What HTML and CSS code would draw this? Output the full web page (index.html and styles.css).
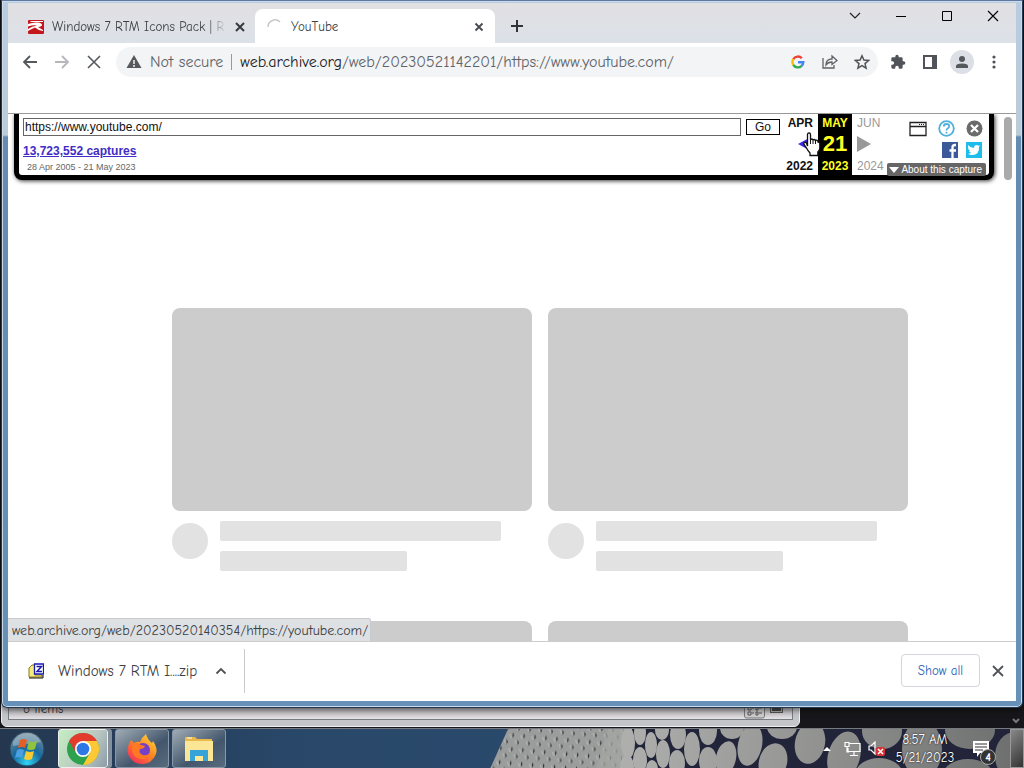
FILE: index.html
```html
<!DOCTYPE html>
<html lang="en">
<head>
<meta charset="utf-8">
<title>YouTube</title>
<link rel="stylesheet" href="styles.css">
</head>
<body>
<main class="desktop">
  <section class="explorer" aria-label="Explorer">
    <div class="explorer-status">
      <span>6 items</span>
      <span class="views">
        <svg width="22" height="16" viewBox="0 0 22 16"><rect x=".5" y="-4" width="20" height="19" rx="2" fill="#ccc" stroke="#777"/><path d="M4 4h3v3H4zM4 9h3v3H4zM12 4h2v3h-2zM12 9h2v3h-2z" fill="none" stroke="#555"/><path d="M8 5h2M8 10h2M15 5h3M15 10h3" stroke="#555"/></svg>
        <svg width="14" height="16" viewBox="0 0 14 16"><rect x=".5" y="0.5" width="12" height="9" fill="#aaa" stroke="#555"/><path d="M2 3h9v5H2z" fill="#444"/></svg>
      </span>
    </div>
  </section>
  <svg class="peek-chevron" width="8" height="6" viewBox="0 0 8 6"><path d="M1 1l3 3 3-3" fill="none" stroke="#777" stroke-width="2"/></svg>

  <section class="browser" aria-label="Browser">
    <header class="tabstrip">
      <div class="tab">
        <svg class="favicon" width="16" height="16" viewBox="0 0 16 16"><rect y="1" width="16" height="14" rx="1" fill="#c5161d"/><path d="M0 5q5-2 10-1.500 4 .5 4 2.500 0 1.500-4 2l5 3v1q-4 0-8-3.500-3 1-7 3.500v-2q4-3 9-3.500Q5 5.500 0 7.500zM3 2h12v1H2z" fill="#fff"/></svg>
        <span class="tab-title fade">Windows 7 RTM Icons Pack | R</span>
        <button class="plain" aria-label="Close tab"><svg width="10" height="10" viewBox="0 0 10 10"><path d="M1 1l8 8M9 1L1 9" stroke="#36393d" stroke-width="2"/></svg></button>
      </div>
      <div class="tab active">
        <svg class="favicon" width="16" height="16" viewBox="0 0 16 16"><path d="M1 8a7 7 0 0 1 12-5" fill="none" stroke="#c6c8cc" stroke-width="1.500"/></svg>
        <span class="tab-title">YouTube</span>
        <button class="plain" aria-label="Close tab"><svg width="10" height="10" viewBox="0 0 10 10"><path d="M1.500 1.500l7 7M8.500 1.500l-7 7" stroke="#46494d" stroke-width="1.800"/></svg></button>
      </div>
      <button class="plain new-tab" aria-label="New tab"><svg width="14" height="14" viewBox="0 0 14 14"><path d="M7 1v12M1 7h12" stroke="#303338" stroke-width="2"/></svg></button>
      <div class="window-controls">
        <button class="plain" aria-label="Search tabs"><svg width="12" height="12" viewBox="0 0 12 12"><path d="M1 3l5 5 5-5" fill="none" stroke="#222" stroke-width="1.200"/></svg></button>
        <button class="plain" aria-label="Minimize"><svg width="12" height="12" viewBox="0 0 12 12"><path d="M1 6.500h10" stroke="#000"/></svg></button>
        <button class="plain" aria-label="Maximize"><svg width="12" height="12" viewBox="0 0 12 12"><path d="M1.500 1.500h9v9h-9z" fill="none" stroke="#000"/></svg></button>
        <button class="plain" aria-label="Close"><svg width="12" height="12" viewBox="0 0 12 12"><path d="M1 1l10 10M11 1L1 11" stroke="#000" stroke-width="1.100"/></svg></button>
      </div>
    </header>

    <nav class="toolbar" aria-label="Navigation">
      <div class="nav-buttons">
        <button class="plain" aria-label="Back"><svg width="16" height="16" viewBox="0 0 16 16"><path d="M15 8H2M8 2L2 8l6 6" fill="none" stroke="#55585c" stroke-width="1.800"/></svg></button>
        <button class="plain" aria-label="Forward"><svg width="16" height="16" viewBox="0 0 16 16"><path d="M1 8h13M8 2l6 6-6 6" fill="none" stroke="#b5b7ba" stroke-width="1.800"/></svg></button>
        <button class="plain" aria-label="Stop"><svg width="16" height="16" viewBox="0 0 16 16"><path d="M2 2l12 12M14 2L2 14" stroke="#55585c" stroke-width="1.600"/></svg></button>
      </div>
      <div class="omnibox">
        <svg width="16" height="16" viewBox="0 0 16 16"><path d="M8 1l7.500 13H.5z" fill="#55585c"/><path d="M8 6v4M8 11v2" stroke="#f1f3f4" stroke-width="1.500"/></svg>
        <span class="not-secure">Not secure</span>
        <span class="url"><b>web.archive.org</b>/web/20230521142201/https://www.youtube.com/</span>
        <button class="plain" aria-label="Search with Google"><svg width="14" height="14" viewBox="0 0 14 14" fill="none" stroke-width="2.400"><path d="M2.300 4.200A5.300 5.300 0 0 1 10.800 3.300" stroke="#ea4335"/><path d="M2.300 4.200a5.300 5.300 0 0 0 0 5.600" stroke="#fbbc05"/><path d="M2.300 9.800a5.300 5.300 0 0 0 8.300 1" stroke="#34a853"/><path d="M7 7.200h5.300a5.300 5.300 0 0 1-1.700 3.600" stroke="#4285f4"/></svg></button>
        <button class="plain" aria-label="Share"><svg width="16" height="16" viewBox="0 0 16 16"><path d="M1 4v10h11v-3M4 11q0-6 6-6V2l5 4.500-5 4V8q-4 0-6 3z" fill="none" stroke="#5f6368" stroke-width="1.300"/></svg></button>
        <button class="plain" aria-label="Bookmark"><svg width="16" height="16" viewBox="0 0 16 16"><path d="M8 1.800l1.900 4.300 4.700.4-3.600 3.100 1.100 4.600L8 11.700l-4.100 2.500L5 9.600 1.400 6.500l4.700-.4z" fill="none" stroke="#505458" stroke-width="1.500"/></svg></button>
      </div>
      <div class="actions">
        <button class="plain" aria-label="Extensions"><svg width="16" height="16" viewBox="0 0 24 24"><path d="M20.500 11H19V7a2 2 0 0 0-2-2h-4V3.500a2.500 2.500 0 0 0-5 0V5H4a2 2 0 0 0-2 2v3.800h1.500a2.700 2.700 0 0 1 0 5.400H2V20a2 2 0 0 0 2 2h3.800v-1.500a2.700 2.700 0 0 1 5.400 0V22H17a2 2 0 0 0 2-2v-4h1.500a2.500 2.500 0 0 0 0-5z" fill="#505357"/></svg></button>
        <button class="plain" aria-label="Side panel"><svg width="14" height="14" viewBox="0 0 14 14"><path d="M1 1h12v12H1z" fill="none" stroke="#505357" stroke-width="2"/><path d="M9 1h4v12H9z" fill="#505357"/></svg></button>
        <button class="plain avatar" aria-label="Profile"><svg width="14" height="14" viewBox="0 0 14 14" fill="#55585c"><circle cx="7" cy="4" r="3"/><path d="M1 13v-2q0-2.500 6-2.500t6 2.500v2z"/></svg></button>
        <button class="plain" aria-label="Menu"><svg width="16" height="16" viewBox="0 0 16 16" fill="#505357"><circle cx="8" cy="3" r="1.600"/><circle cx="8" cy="8" r="1.600"/><circle cx="8" cy="13" r="1.600"/></svg></button>
      </div>
    </nav>
    <div class="blank-bar"></div>

    <div class="viewport">
      <div class="wayback">
        <div class="wb-search">
          <form class="wb-form"><input type="text" aria-label="Archive URL" value="https://www.youtube.com/"><button type="button">Go</button></form>
          <a class="captures" href="#">13,723,552 captures</a>
          <span class="range">28 Apr 2005 - 21 May 2023</span>
        </div>
        <table class="calendar">
          <tr><td class="prev">APR</td><td class="now">MAY</td><td class="next">JUN</td></tr>
          <tr class="day"><td class="prev"><span class="arrow-cell"><svg width="13" height="14" viewBox="0 0 13 14"><path d="M0 7l13-7v14z" fill="#3a28e0"/></svg>
            <svg class="cursor" width="18" height="25" viewBox="0 0 18 25"><path d="M4.500 14V2.500Q4.500 1 6 1t1.500 1.500V8q.2-1 1.300-1T10 8.500q.2-1 1.300-1t1.200 1.500q.2-1 1.300-.8T15 10q1.800 0 1.800 1.500V16q0 2-2 4v3.500H7V21q-2-2-3.500-5L1 12.500q-.5-1.500.5-2t2 .5z" fill="#fff" stroke="#111" stroke-width="1.300"/><path d="M7.500 8v4M10 8.500V12M12.500 9v3" stroke="#111"/></svg></span></td><td class="now">21</td><td class="next"><svg width="14" height="16" viewBox="0 0 14 16"><path d="M0 0l14 8-14 8z" fill="#999"/></svg></td></tr>
          <tr><td class="prev">2022</td><td class="now">2023</td><td class="next">2024</td></tr>
        </table>
        <div class="wb-tools">
          <div class="wb-icons">
            <button class="plain" aria-label="Screenshot"><svg width="18" height="16" viewBox="0 0 18 16"><path d="M1 1.500h16v13H1zM1 5.500h16" fill="none" stroke="#222" stroke-width="1.300"/><path d="M10 3.500h1M12 3.500h1M14 3.500h1" stroke="#222"/></svg></button>
            <button class="plain" aria-label="Help"><svg width="17" height="17" viewBox="0 0 17 17"><circle cx="8.500" cy="8.500" r="7.300" fill="none" stroke="#4eb0db" stroke-width="1.800"/><path d="M5.800 6.500q0-2.500 2.700-2.500t2.700 2.200q0 1.300-1.300 2T8.500 10.500M8.500 11.800v1.800" fill="none" stroke="#4eb0db" stroke-width="1.800"/></svg></button>
            <button class="plain" aria-label="Close toolbar"><svg width="17" height="17" viewBox="0 0 17 17"><circle cx="8.500" cy="8.500" r="8" fill="#6b6b6b"/><path d="M5 5l7 7M12 5l-7 7" stroke="#fff" stroke-width="2.200"/></svg></button>
          </div>
          <div class="wb-icons">
            <a href="#" aria-label="Facebook"><svg width="16" height="16" viewBox="0 0 16 16"><path d="M0 0h16v16H0z" fill="#3b5998"/><path d="M14 3h-1q-2.500 0-2.500 2.500V16M7.500 8.500H14" fill="none" stroke="#fff" stroke-width="2.300"/></svg></a>
            <a href="#" aria-label="Twitter"><svg width="16" height="16" viewBox="0 0 16 16"><path d="M0 0h16v16H0z" fill="#1dbcea"/><path d="M2 3q2.500 3 6 3 0-3 3-3l1.500.8L14 3.200 13 5q.5 7-6 8-3 .3-5-1.200 2 0 3.300-1Q3.500 10.500 3 9h1.200Q2 8 2.200 6z" fill="#fff"/></svg></a>
          </div>
          <button class="about"><svg width="10" height="6" viewBox="0 0 10 6"><path d="M0 0h10L5 6z" fill="#fff"/></svg>About this capture</button>
        </div>
      </div>
      <div class="scrollbar"></div>
      <div class="feed">
        <article class="card"><div class="thumb"></div><div class="meta"><i class="circle"></i><div class="lines"><i class="line long"></i><i class="line"></i></div></div></article>
        <article class="card"><div class="thumb"></div><div class="meta"><i class="circle"></i><div class="lines"><i class="line long"></i><i class="line"></i></div></div></article>
        <article class="card"><div class="thumb"></div></article>
        <article class="card"><div class="thumb"></div></article>
      </div>
      <div class="status-bubble">web.archive.org/web/20230520140354/https://youtube.com/</div>
    </div>

    <footer class="downloads">
      <div class="download">
        <svg width="16" height="16" viewBox="0 0 16 16"><path d="M1 5l3-3h3v10h7v2H1z" fill="#f4ec7c" stroke="#8b7b10"/><path d="M1 15h14v-3" fill="none" stroke="#111"/><path d="M6.500 1h9v10h-9z" fill="#fff" stroke="#1a1ab0" stroke-width="1.300"/><path d="M8.500 3.500h5l-4.500 5h5" fill="none" stroke="#1a1ab0" stroke-width="1.500"/></svg>
        <span>Windows 7 RTM I....zip</span>
        <button class="plain" aria-label="Download options"><svg width="12" height="8" viewBox="0 0 12 8"><path d="M1.500 6.500L6 2l4.500 4.500" fill="none" stroke="#505357" stroke-width="1.800"/></svg></button>
      </div>
      <button class="show-all">Show all</button>
      <button class="plain" aria-label="Close downloads"><svg width="12" height="12" viewBox="0 0 12 12"><path d="M1 1l10 10M11 1L1 11" stroke="#505357" stroke-width="1.800"/></svg></button>
    </footer>
  </section>
</main>

<footer class="taskbar">
  <svg class="wallpaper" width="536" height="40" viewBox="0 0 536 40">
    <defs>
      <pattern id="small" width="11" height="14" patternUnits="userSpaceOnUse" patternTransform="rotate(5)"><rect width="11" height="14" fill="#9b9d9c"/><path d="M3 1l1.500 3L3 7zM8.500 8l1.500 3-1.500 3z" fill="#303336"/><path d="M0 3l2 4M6 9l2 4" stroke="#bdbdb9"/></pattern>
      <linearGradient id="disc" gradientUnits="userSpaceOnUse" x1="140" x2="536"><stop stop-color="#aeafad"/><stop offset=".4" stop-color="#979896"/><stop offset="1" stop-color="#6c6e6d"/></linearGradient>
    </defs>
    <path d="M20 0H190V40H2z" fill="url(#small)"/>
    <path d="M120 0H160V40H108z" fill="#a5a6a4" opacity=".7"/>
    <path d="M144 0H536V40H138z" fill="#22253a"/>
    <g fill="url(#disc)">
      <ellipse cx="140" cy="14" rx="7" ry="16"/><ellipse cx="139" cy="38" rx="7" ry="12"/><ellipse cx="152" cy="4" rx="6" ry="12"/><ellipse cx="163" cy="16" rx="6" ry="13"/><ellipse cx="152" cy="31" rx="7" ry="13"/><ellipse cx="164" cy="40" rx="6" ry="9"/><ellipse cx="174" cy="1" rx="7" ry="10"/><ellipse cx="175" cy="25" rx="7" ry="14"/><ellipse cx="190" cy="6" rx="8" ry="14"/><ellipse cx="189" cy="34" rx="8" ry="13"/><ellipse cx="204" cy="20" rx="8" ry="17"/><ellipse cx="220" cy="2" rx="9" ry="14"/><ellipse cx="220" cy="32" rx="9" ry="14"/><ellipse cx="244" cy="-1" rx="12" ry="11"/><ellipse cx="238" cy="29" rx="10" ry="17" transform="rotate(12 238 29)"/><ellipse cx="262" cy="16" rx="12" ry="21" transform="rotate(12 262 16)"/><ellipse cx="294" cy="-2" rx="15" ry="12"/><ellipse cx="285" cy="33" rx="14" ry="19" transform="rotate(16 285 33)"/><ellipse cx="322" cy="14" rx="15" ry="21" transform="rotate(12 322 14)"/><ellipse cx="356" cy="27" rx="16" ry="25" transform="rotate(16 356 27)"/><ellipse cx="394" cy="2" rx="20" ry="18"/><ellipse cx="391" cy="44" rx="23" ry="15"/><ellipse cx="434" cy="20" rx="20" ry="29"/><ellipse cx="482" cy="1" rx="25" ry="19"/><ellipse cx="480" cy="46" rx="25" ry="16"/><ellipse cx="527" cy="27" rx="20" ry="24"/>
    </g>
  </svg>
  <button class="plain start" aria-label="Start"><svg width="36" height="36" viewBox="0 0 36 36"><defs><radialGradient id="orb" cx=".5" cy=".9" r=".85"><stop stop-color="#30d5f5"/><stop offset=".5" stop-color="#17699e"/><stop offset="1" stop-color="#6c8799"/></radialGradient></defs><circle cx="18" cy="18" r="17" fill="url(#orb)" stroke="#284357"/><path d="M4 11q5-9 14-9t14 9q-14 2-28 4z" fill="#fff" opacity=".3"/><path d="M11 9q3-2 7 0l-2 8q-3-2-7 0z" fill="#e65f22"/><path d="M20 10q4 2 8 0l-2 8q-4 2-8 0z" fill="#91c43d"/><path d="M8 19q4-2 7 0l-2 8q-3-2-7 0z" fill="#4c9fe0"/><path d="M17 20q4 2 8 0l-2 8q-4 2-8 0z" fill="#f8c930"/></svg></button>
  <button class="task running" aria-label="Chrome"><svg width="34" height="34" viewBox="0 0 34 34"><circle cx="17" cy="17" r="16" fill="#2da14c"/><path d="M3.100 9A16 16 0 0 1 30.900 9H17l-7 12z" fill="#e33b2e"/><path d="M30.900 9A16 16 0 0 1 17 33l7-12-7-12z" fill="#fcc934"/><circle cx="17" cy="17" r="8" fill="#fff"/><circle cx="17" cy="17" r="6.300" fill="#2d78e5"/></svg></button>
  <button class="task" aria-label="Firefox"><svg width="32" height="32" viewBox="0 0 32 32"><defs><linearGradient id="fire" x1="1" x2=".2" y2="1"><stop stop-color="#ffe64a"/><stop offset=".5" stop-color="#ff8a20"/><stop offset="1" stop-color="#f52c5c"/></linearGradient></defs><path d="M5 7l3 3q3-2 6-1Q16 4 20 1q1 5 6 9l1-2q5 7 3 13-4 10-14 10T2 21q-2-6 3-14z" fill="url(#fire)"/><circle cx="17" cy="17" r="7" fill="#7540c8"/><path d="M7 11q4-2 8 1l4 1q-1 3-5 3-2 4 3 6 4 1 7-2-2 7-9 6-8-1-9-9z" fill="#ff7822"/></svg></button>
  <button class="task" aria-label="File Explorer"><svg width="30" height="28" viewBox="0 0 30 28"><path d="M1 2h10l2 2h15v22H1z" fill="#e9b94c"/><path d="M1 6h28v20H1z" fill="#fbe596"/><path d="M6 26V15h18v11h-5v-5h-8v5z" fill="#36a3d9"/><path d="M3 3h5" stroke="#fff"/></svg></button>
  <div class="tray">
    <svg class="tray-up" width="8" height="5" viewBox="0 0 8 5"><path d="M0 5l4-4 4 4z" fill="#fff"/></svg>
    <svg class="tray-net" width="17" height="16" viewBox="0 0 17 16"><path d="M5 2.500h11v8H4V7M10 11v3M6 14.500h8M1 1.500h4v4H1zM3 6v5h2" fill="none" stroke="#fff" stroke-width="1.200"/></svg>
    <svg class="tray-sound" width="18" height="16" viewBox="0 0 18 16"><path d="M1 5h2l4-4v12L3 9H1z" fill="none" stroke="#fff" stroke-width="1.200"/><rect x="8" y="6" width="9" height="9" rx="2" fill="#d93235"/><path d="M10 8l5 5M15 8l-5 5" stroke="#fff" stroke-width="1.500"/></svg>
    <div class="clock"><span>8:57 AM</span><span>5/21/2023</span></div>
    <div class="notify"><svg width="16" height="16" viewBox="0 0 16 16"><path d="M0 0h16v12H7l-3 4v-4H0z" fill="#fff"/><path d="M2 3h12M2 6h12M2 9h8" stroke="#333"/></svg><span class="badge">4</span></div>
    <button class="show-desktop" aria-label="Show desktop"></button>
  </div>
</footer>
</body>
</html>
```
FILE: styles.css
```css
* { box-sizing: border-box; }
html, body { height: 100%; margin: 0; }
body {
  display: flex;
  flex-direction: column;
  overflow: hidden;
  background: #17171b;
  color: #3c4043;
  font: 13px/20px "Comic Sans MS", "Comic Neue", "Open Sans", sans-serif;
}
svg { display: block; flex: none; }
button, input { font: inherit; color: inherit; }
.plain { display: grid; place-items: center; flex: none; padding: 0; border: 0; background: none; }

.desktop { position: relative; flex: 1; min-height: 0; }
.explorer {
  position: absolute;
  left: 1px;
  bottom: 1px;
  width: 78%;
  height: 60px;
  padding: 0 6px 6px;
  display: flex;
  background: #c3c5c9;
  border: 1px solid #eee;
  border-radius: 0 0 6px 6px;
}
.explorer-status {
  flex: 1;
  display: flex;
  justify-content: space-between;
  align-items: flex-end;
  padding: 0 8px 0 14px;
  border: 1px solid #777b82;
  background: linear-gradient(#8b8688 60%, #e5e2e6);
  color: #333;
}
.views { display: flex; gap: 4px; }
.peek-chevron { position: absolute; right: 4px; bottom: 4px; }

.browser {
  position: absolute;
  inset: 0 1px 20px 1px;
  display: flex;
  flex-direction: column;
  padding: 2px 6px 6px;
  border: 1px solid #24394e;
  border-top-color: #6078a0;
  border-radius: 0 0 6px 6px;
  background: linear-gradient(#b9cbe0, #bccbd8 134px, #668bb0 136px, #6791b8);
  box-shadow: inset 0 0 0 1px #c8dced, 0 2px 6px #0008;
}
.tabstrip {
  display: flex;
  align-items: flex-end;
  height: 40px;
  flex: none;
  background: linear-gradient(#e1e0e3, #dce1e8);
}
.tab { display: flex; align-items: center; gap: 8px; width: 247px; height: 34px; padding: 2px 10px 0 20px; }
.tab.active { width: 240px; padding-left: 12px; padding-right: 11px; background: #fff; border-radius: 8px 8px 0 0; }
.tab-title { flex: 1; white-space: nowrap; }
.fade { mask-image: linear-gradient(90deg, #000 88%, transparent); }
.new-tab { width: 44px; height: 34px; }
.window-controls { display: flex; align-self: flex-start; margin-left: auto; }
.window-controls .plain { width: 46px; height: 25px; }
.toolbar {
  display: flex;
  align-items: center;
  height: 38px;
  flex: none;
  gap: 8px;
  padding: 0 10px 0 14px;
  background: #fff;
}
.nav-buttons { display: flex; gap: 16px; }
.omnibox {
  flex: 1;
  display: flex;
  align-items: center;
  min-width: 0;
  height: 30px;
  gap: 8px;
  margin-left: 6px;
  padding: 0 4px 0 10px;
  border-radius: 15px;
  background: #f2f4f5;
  font-size: 16px;
  color: #5f6368;
}
.omnibox .plain { width: 24px; }
.not-secure { padding-right: 8px; line-height: 16px; border-right: 1px solid #999; white-space: nowrap; }
.url { flex: 1; overflow: hidden; white-space: nowrap; }
.url b { font-weight: 400; color: #202124; }
.actions { display: flex; align-items: center; gap: 8px; }
.actions .plain { width: 24px; height: 24px; }
.actions .avatar { border-radius: 50%; background: #dcdfe6; }
.blank-bar { flex: none; height: 33px; background: #fff; border-bottom: 1px solid #999; }

.viewport { position: relative; flex: 1; min-height: 0; overflow: hidden; background: #fff; }
.wayback {
  display: flex;
  height: 66px;
  margin: 0 22px 0 6px;
  border: solid #000;
  border-width: 0 5px 5px;
  border-radius: 0 0 8px 8px;
  box-shadow: 1px 1px 4px #333;
  background: #fff;
  font: 12px/14px "Liberation Sans", Arial, sans-serif;
}
.wb-search { flex: 1; display: flex; flex-direction: column; align-items: flex-start; padding: 4px 0 0 4px; }
.wb-form { display: flex; align-self: stretch; align-items: center; gap: 5px; }
.wb-form input { flex: 1; min-width: 0; height: 18px; padding: 0 1px; border: 1px solid #666; background: #fff; color: #111; }
.wb-form button { width: 34px; height: 16px; padding: 0; border: 1px solid #000; background: #fff; color: #111; line-height: 14px; }
.captures { margin-top: 8px; color: #402dc5; font-weight: 700; }
.range { padding: 4px 4px 0; font-size: 9px; line-height: 10px; color: #666; }
.calendar { border-collapse: collapse; height: 61px; color: #111; text-align: center; }
.calendar td { width: 34px; padding: 0; font-weight: 700; line-height: 18px; }
.calendar .prev { width: 38px; padding-right: 5px; text-align: right; }
.calendar .now { background: #000; color: #ff2; }
.calendar .next { width: 37px; padding-left: 5px; color: #999; font-weight: 400; text-align: left; }
.calendar .day .now { font-size: 22px; line-height: 24px; }
.arrow-cell { position: relative; display: block; padding-left: 18px; }
.calendar .cursor { position: absolute; left: 23px; top: -5px; }
.wb-tools { display: flex; flex-direction: column; align-items: flex-end; gap: 5px; width: 100px; padding: 6px 3px 0 0; }
.wb-icons { display: flex; align-items: center; gap: 11px; padding-right: 3px; }
.wb-icons + .wb-icons { gap: 8px; padding-right: 4px; }
.about {
  display: flex;
  align-items: center;
  gap: 2px;
  height: 13px;
  padding: 0 4px 0 2px;
  border: 0;
  border-radius: 2px;
  background: #666;
  color: #fff;
  font-size: 10px;
  line-height: 13px;
  white-space: nowrap;
}
.scrollbar { position: absolute; top: 3px; right: 4px; width: 8px; height: 63px; border-radius: 4px; background: #aaa; }
.feed { display: grid; grid-template-columns: 1fr 1fr; column-gap: 16px; row-gap: 50px; padding: 128px 108px 0 164px; }
.thumb { aspect-ratio: 16 / 9; border-radius: 8px; background: #ccc; }
.meta { display: flex; gap: 12px; padding-top: 10px; }
.circle { flex: none; width: 36px; height: 36px; margin-top: 2px; border-radius: 50%; background: #e2e2e2; }
.lines { flex: 1; }
.line { display: block; width: 60%; height: 20px; border-radius: 2px; background: #e2e2e2; }
.line.long { width: 90%; margin-bottom: 10px; }
.status-bubble {
  position: absolute;
  left: 0;
  bottom: 0;
  padding: 2px 2px 0 4px;
  border: solid #c8cacd;
  border-width: 1px 1px 0 0;
  border-radius: 0 3px 0 0;
  background: #dee1e4;
  font-size: 14px;
}
.downloads {
  flex: none;
  display: flex;
  align-items: center;
  gap: 12px;
  height: 60px;
  padding: 0 12px 2px 20px;
  border-top: 1px solid #ccc;
  background: #fff;
}
.download { display: flex; align-items: center; gap: 14px; width: 217px; height: 44px; border-right: 1px solid #c8cacd; font-size: 15px; white-space: nowrap; }
.download .plain { margin-left: 4px; }
.show-all { width: 79px; height: 33px; margin-left: auto; padding: 0; border: 1px solid #d2d5da; border-radius: 4px; background: #fff; color: #2b5fb5; }

.taskbar {
  position: relative;
  flex: none;
  display: flex;
  height: 40px;
  padding-left: 8px;
  border-top: 1px solid #777b80;
  background: linear-gradient(90deg, #24374f, #29486a 30%, #2b4c6f);
  color: #fff;
}
.wallpaper { position: absolute; right: 0; top: 0; }
.start { width: 38px; margin-right: 12px; }
.task {
  display: grid;
  place-items: center;
  width: 54px;
  height: 39px;
  margin-right: 3px;
  padding: 0;
  border: 1px solid #8998a6;
  border-radius: 3px;
  background: linear-gradient(145deg, #a0acb5, #43566c 60%, #596b7d);
}
.task.running { width: 50px; margin-right: 7px; border-color: #eee; background: linear-gradient(120deg, #c4efc2, #b9c6c0 60%, #8d9da8); box-shadow: 4px 0 #84919d; }
.tray { position: relative; display: flex; align-items: center; margin-left: auto; }
.tray-net { margin-left: 13px; }
.tray-sound { margin-left: 7px; }
.clock { display: flex; flex-direction: column; width: 78px; text-align: center; line-height: 18px; text-shadow: 0 0 2px #000; }
.notify { position: relative; margin: 0 21px 0 9px; }
.badge { position: absolute; left: 7px; top: 8px; width: 16px; height: 16px; border: 1px solid #aaa; border-radius: 50%; background: #333; font-size: 12px; line-height: 14px; font-weight: 700; text-align: center; }
.show-desktop { width: 14px; height: 39px; padding: 0; border: 1px solid #999; background: linear-gradient(135deg, #888, #333); }
```
